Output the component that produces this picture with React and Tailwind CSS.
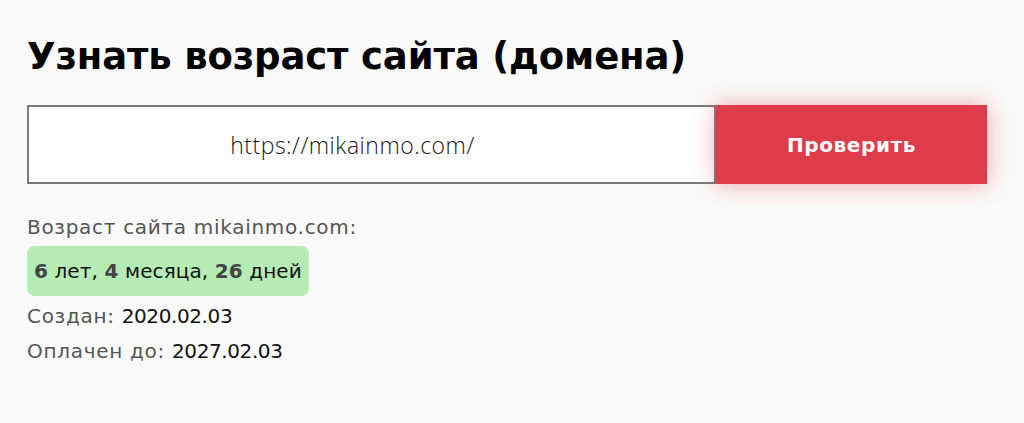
import React from "react";

function App() {
  return (
    <div className="min-h-screen bg-[#fafafa] text-black font-['DejaVu_Sans',sans-serif]">
      <div className="pl-[27px] pt-[31px]">
        <h1 className="text-[37px] font-bold leading-[52px] tracking-[-0.15px]">
          Узнать возраст сайта (домена)
        </h1>

        <div className="flex mt-[22px] w-[960px]">
          <input
            type="text"
            defaultValue="https://mikainmo.com/"
            className="w-[689px] h-[79px] bg-white border-2 border-[#7a7a7a] text-center pr-[38px] text-[23px] tracking-[0.5px] text-[#1a1a1a] font-['Open_Sans',sans-serif] font-light outline-none"
          />
          <button className="w-[271px] h-[79px] bg-[#de3c4b] text-white text-[20px] tracking-[0.6px] font-bold shadow-[0_0_22px_rgba(222,60,75,0.45)]">
            Проверить
          </button>
        </div>

        <div className="mt-[30px] text-[20px] tracking-[0.7px] text-[#555] leading-[26px]">
          Возраст сайта mikainmo.com:
        </div>
        <div className="mt-[6px] inline-flex items-center h-[50px] px-[7px] rounded-[8px] bg-[#b5ebb5] text-[20px] tracking-[0.1px] text-[#111]">
          <b className="text-[#444]">6</b>&nbsp;лет,&nbsp;<b className="text-[#444]">4</b>&nbsp;месяца,&nbsp;
          <b className="text-[#444]">26</b>&nbsp;дней
        </div>
        <div className="mt-[7px] text-[20px] tracking-[0.7px] text-[#555] leading-[26px]">
          Создан: <span className="text-[#111] tracking-[-0.4px]">2020.02.03</span>
        </div>
        <div className="mt-[9px] text-[20px] tracking-[0.7px] text-[#555] leading-[26px]">
          Оплачен до: <span className="text-[#111] tracking-[-0.4px]">2027.02.03</span>
        </div>
      </div>
    </div>
  );
}

export default App;
